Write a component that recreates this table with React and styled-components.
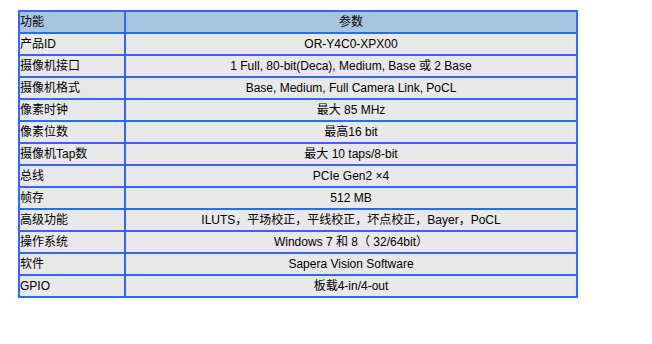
import React from 'react';
import styled, { createGlobalStyle } from 'styled-components';

const GlobalStyle = createGlobalStyle`
    body {
        margin: 0;
        background: #fff;
        font-family: "Liberation Sans", Arial, "Noto Sans CJK SC", sans-serif;
    }
`;

const specs = [
    ['产品ID', 'OR-Y4C0-XPX00'],
    ['摄像机接口', '1 Full, 80-bit(Deca), Medium, Base 或 2 Base'],
    ['摄像机格式', 'Base, Medium, Full Camera Link, PoCL'],
    ['像素时钟', '最大 85 MHz'],
    ['像素位数', '最高16 bit'],
    ['摄像机Tap数', '最大 10 taps/8-bit'],
    ['总线', 'PCIe Gen2 ×4'],
    ['帧存', '512 MB'],
    ['高级功能', 'ILUTS，平场校正，平线校正，坏点校正，Bayer，PoCL'],
    ['操作系统', 'Windows 7 和 8（ 32/64bit）'],
    ['软件', 'Sapera Vision Software'],
    ['GPIO', '板载4-in/4-out'],
];

const Page = styled.div`
    padding: 10px 0 0 18px;
`;

const Table = styled.table`
    width: 560px;
    border-collapse: collapse;
    border: 2px solid #3366ff;
    font-size: 12px;
    color: #000;
`;

const Row = styled.tr`
    background: ${props => props.head ? '#a8c4df' : '#e8e8e8'};
`;

const Cell = styled.td`
    border: 2px solid #3366ff;
    height: 20px;
    padding: 0;
    line-height: 20px;
    text-align: ${props => props.center ? 'center' : 'left'};
    width: ${props => props.label ? '104px' : 'auto'};
    white-space: nowrap;
`;

const App = () => {
    return (
        <Page>
            <GlobalStyle />
            <Table>
                <tbody>
                    <Row head>
                        <Cell label>功能</Cell>
                        <Cell center>参数</Cell>
                    </Row>
                    {specs.map(([name, value]) => (
                        <Row key={name}>
                            <Cell label>{name}</Cell>
                            <Cell center>{value}</Cell>
                        </Row>
                    ))}
                </tbody>
            </Table>
        </Page>
    );
};

export default App;
